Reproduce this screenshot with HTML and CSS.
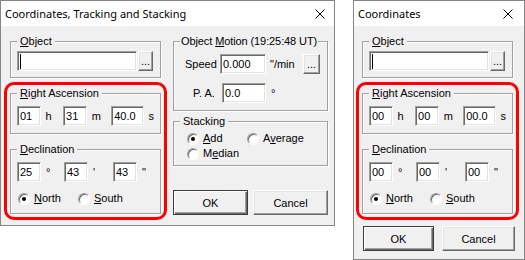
FILE: index.html
```html
<!DOCTYPE html>
<html lang="en">
<head>
    <meta charset="UTF-8">
    <meta name="viewport" content="width=device-width, initial-scale=1.0">
    <title>Coordinates Dialogs</title>
    <link rel="stylesheet" href="styles.css">
</head>
<body>
    <div class="desktop">
        <!-- Full dialog -->
        <div class="window window-main">
            <div class="titlebar">
                <span class="title">Coordinates, Tracking and Stacking</span>
                <svg class="close" width="10" height="10" viewBox="0 0 10 10"><path d="M0.5 0.5 L9.5 9.5 M9.5 0.5 L0.5 9.5" stroke="#000" stroke-width="1" fill="none"/></svg>
            </div>
            <div class="client">
                <div class="column-left">
                    <fieldset class="group group-object">
                        <legend><u>O</u>bject</legend>
                        <div class="field-row">
                            <div class="edit edit-object"><span class="caret"></span></div>
                            <button class="btn btn-more">...</button>
                        </div>
                    </fieldset>

                    <div class="highlight">
                        <fieldset class="group group-ra">
                            <legend><u>R</u>ight Ascension</legend>
                            <div class="coord-row">
                                <div class="edit edit-short">01</div><span class="unit unit-first">h</span>
                                <div class="edit edit-short">31</div><span class="unit unit-second">m</span>
                                <div class="edit edit-long">40.0</div><span class="unit">s</span>
                            </div>
                        </fieldset>
                        <fieldset class="group group-dec">
                            <legend><u>D</u>eclination</legend>
                            <div class="coord-row">
                                <div class="edit edit-short">25</div><span class="unit unit-first">°</span>
                                <div class="edit edit-short">43</div><span class="unit unit-second">'</span>
                                <div class="edit edit-short">43</div><span class="unit">"</span>
                            </div>
                            <div class="radio-row">
                                <label class="option"><span class="radio checked"></span><span><u>N</u>orth</span></label>
                                <label class="option"><span class="radio"></span><span><u>S</u>outh</span></label>
                            </div>
                        </fieldset>
                    </div>
                </div>

                <div class="column-right">
                    <fieldset class="group group-motion">
                        <legend>Object <u>M</u>otion (19:25:48 UT)</legend>
                        <div class="motion-row row-speed">
                            <span class="label-speed">Speed</span>
                            <div class="edit edit-speed">0.000</div>
                            <span class="unit-speed">"/min</span>
                            <button class="btn btn-motion">...</button>
                        </div>
                        <div class="motion-row row-pa">
                            <span class="label-pa">P. A.</span>
                            <div class="edit edit-pa">0.0</div>
                            <span class="unit-deg">°</span>
                        </div>
                    </fieldset>
                    <fieldset class="group group-stack">
                        <legend>Stacking</legend>
                        <div class="stack-grid">
                            <label class="option"><span class="radio checked"></span><span><u>A</u>dd</span></label>
                            <label class="option"><span class="radio"></span><span>A<u>v</u>erage</span></label>
                            <label class="option"><span class="radio"></span><span>M<u>e</u>dian</span></label>
                        </div>
                    </fieldset>
                    <div class="buttons">
                        <button class="btn btn-default btn-ok">OK</button>
                        <button class="btn btn-cancel">Cancel</button>
                    </div>
                </div>
            </div>
        </div>

        <!-- Small dialog -->
        <div class="window window-small">
            <div class="titlebar">
                <span class="title">Coordinates</span>
                <svg class="close" width="10" height="10" viewBox="0 0 10 10"><path d="M0.5 0.5 L9.5 9.5 M9.5 0.5 L0.5 9.5" stroke="#000" stroke-width="1" fill="none"/></svg>
            </div>
            <div class="client">
                <div class="column-left">
                    <fieldset class="group group-object">
                        <legend><u>O</u>bject</legend>
                        <div class="field-row">
                            <div class="edit edit-object"><span class="caret"></span></div>
                            <button class="btn btn-more">...</button>
                        </div>
                    </fieldset>

                    <div class="highlight">
                        <fieldset class="group group-ra">
                            <legend><u>R</u>ight Ascension</legend>
                            <div class="coord-row">
                                <div class="edit edit-short">00</div><span class="unit unit-first">h</span>
                                <div class="edit edit-short">00</div><span class="unit unit-second">m</span>
                                <div class="edit edit-long">00.0</div><span class="unit">s</span>
                            </div>
                        </fieldset>
                        <fieldset class="group group-dec">
                            <legend><u>D</u>eclination</legend>
                            <div class="coord-row">
                                <div class="edit edit-short">00</div><span class="unit unit-first">°</span>
                                <div class="edit edit-short">00</div><span class="unit unit-second">'</span>
                                <div class="edit edit-short">00</div><span class="unit">"</span>
                            </div>
                            <div class="radio-row">
                                <label class="option"><span class="radio checked"></span><span><u>N</u>orth</span></label>
                                <label class="option"><span class="radio"></span><span><u>S</u>outh</span></label>
                            </div>
                        </fieldset>
                    </div>
                </div>
                <div class="buttons">
                    <button class="btn btn-default btn-ok">OK</button>
                    <button class="btn btn-cancel">Cancel</button>
                </div>
            </div>
        </div>
    </div>
</body>
</html>
```

FILE: styles.css
```css
body {
    margin: 0;
    background: #ffffff;
    font-family: "Liberation Sans", Arial, sans-serif;
    font-size: 11px;
    color: #000;
}

.desktop {
    display: flex;
    align-items: flex-start;
    gap: 18px;
}

.window {
    box-sizing: border-box;
    display: flex;
    flex-direction: column;
    background: #f0f0f0;
    border: 1px solid #858585;
}

.window-main {
    width: 335px;
    height: 226px;
}

.window-small {
    width: 172px;
    height: 260px;
}

.titlebar {
    flex: none;
    height: 25px;
    display: flex;
    align-items: center;
    justify-content: space-between;
    padding: 0 9px 0 4px;
    background: #ffffff;
    font-family: "Noto Sans", sans-serif;
    font-size: 11px;
}

.window-small .titlebar {
    padding-right: 11px;
}

.close {
    display: block;
}

.client {
    display: flex;
    padding: 9px 0 0 3px;
}

.window-small .client {
    flex-direction: column;
    padding-left: 2px;
}

.column-left {
    width: 163px;
}

.column-right {
    width: 155px;
    margin-left: 6px;
}

/* group boxes */
.group {
    margin: 0;
    padding: 0 6px;
    min-width: 0;
    border: 1px solid #a0a0a0;
    box-shadow: inset 1px 1px #ffffff, 1px 1px #ffffff;
}

.group legend {
    padding: 0 3px;
    line-height: 13px;
    white-space: nowrap;
    background: #f0f0f0;
}

.group-motion legend {
    padding: 0 1px;
    letter-spacing: -0.1px;
}

.group-object {
    margin: 0 6px;
    padding-bottom: 6px;
}

.field-row {
    display: flex;
    margin-top: 3px;
}

/* sunken edit boxes */
.edit {
    box-sizing: border-box;
    height: 20px;
    display: flex;
    align-items: center;
    padding-left: 2px;
    background: #ffffff;
    border: 1px solid;
    border-color: #a0a0a0 #ffffff #ffffff #a0a0a0;
    box-shadow: inset 1px 1px #696969, inset -1px -1px #e3e3e3;
    white-space: nowrap;
}

.edit-object {
    width: 120px;
}

.caret {
    width: 1px;
    height: 15px;
    background: #000;
}

/* raised buttons */
.btn {
    box-sizing: border-box;
    padding: 0;
    background: #f0f0f0;
    color: #000;
    font-family: "Liberation Sans", Arial, sans-serif;
    font-size: 11px;
    border: 1px solid;
    border-color: #ffffff #696969 #696969 #ffffff;
    box-shadow: inset -1px -1px #a0a0a0, inset 1px 1px #e3e3e3;
}

.btn-default {
    border: 1px solid #3c3c3c;
    box-shadow: inset 1px 1px #ffffff, inset -1px -1px #696969, inset -2px -2px #a0a0a0;
}

.btn-more {
    width: 15px;
    height: 20px;
    margin-left: 1px;
}

.highlight {
    margin-top: 4px;
    padding: 2px 3px 3px;
    border: 3px solid #ff0000;
    border-radius: 10px;
}

.group-ra {
    padding-bottom: 7px;
}

.group-dec {
    margin-top: 9px;
    padding-bottom: 8px;
}

.coord-row {
    display: flex;
    align-items: center;
    margin-top: 6px;
}

.edit-short {
    width: 24px;
}

.edit-long {
    width: 33px;
}

.unit {
    margin-left: 5px;
}

.unit-first {
    width: 18px;
}

.unit-second {
    width: 20px;
}

/* radio buttons */
.radio-row {
    display: flex;
    height: 13px;
    margin: 10px 0 0 1px;
}

.radio-row .option:first-child {
    width: 60px;
}

.option {
    display: flex;
    align-items: center;
    gap: 4px;
    line-height: 13px;
}

.radio {
    box-sizing: border-box;
    width: 12px;
    height: 12px;
    display: flex;
    align-items: center;
    justify-content: center;
    border-radius: 50%;
    background: #ffffff;
    border: 1px solid;
    border-color: #a0a0a0 #ffffff #ffffff #a0a0a0;
    box-shadow: inset 1px 1px #696969;
}

.radio.checked::after {
    content: "";
    width: 4px;
    height: 4px;
    border-radius: 50%;
    background: #000;
}

/* object motion */
.group-motion {
    padding-bottom: 7px;
}

.motion-row {
    display: flex;
    align-items: center;
}

.row-speed {
    margin-top: 6px;
}

.row-pa {
    margin-top: 9px;
}

.label-speed {
    width: 35px;
    margin-left: 5px;
}

.label-pa {
    width: 29px;
    margin-left: 13px;
}

.edit-speed {
    width: 46px;
}

.edit-pa {
    width: 44px;
}

.unit-speed {
    width: 29px;
    margin-left: 4px;
}

.unit-deg {
    margin-left: 5px;
}

.btn-motion {
    width: 17px;
    height: 20px;
    margin-left: 4px;
}

.group-stack {
    margin-top: 4px;
    padding-bottom: 5px;
}

.stack-grid {
    display: grid;
    grid-template-columns: 60px auto;
    row-gap: 2px;
    margin: 4px 0 0 7px;
}

.buttons {
    display: flex;
    gap: 5px;
    margin-top: 24px;
}

.btn-ok,
.btn-cancel {
    width: 75px;
    height: 25px;
}

.window-small .buttons {
    gap: 8px;
    margin: 6px 0 0 7px;
}

.window-small .btn-ok {
    width: 71px;
}

.window-small .btn-cancel {
    width: 73px;
}
```
